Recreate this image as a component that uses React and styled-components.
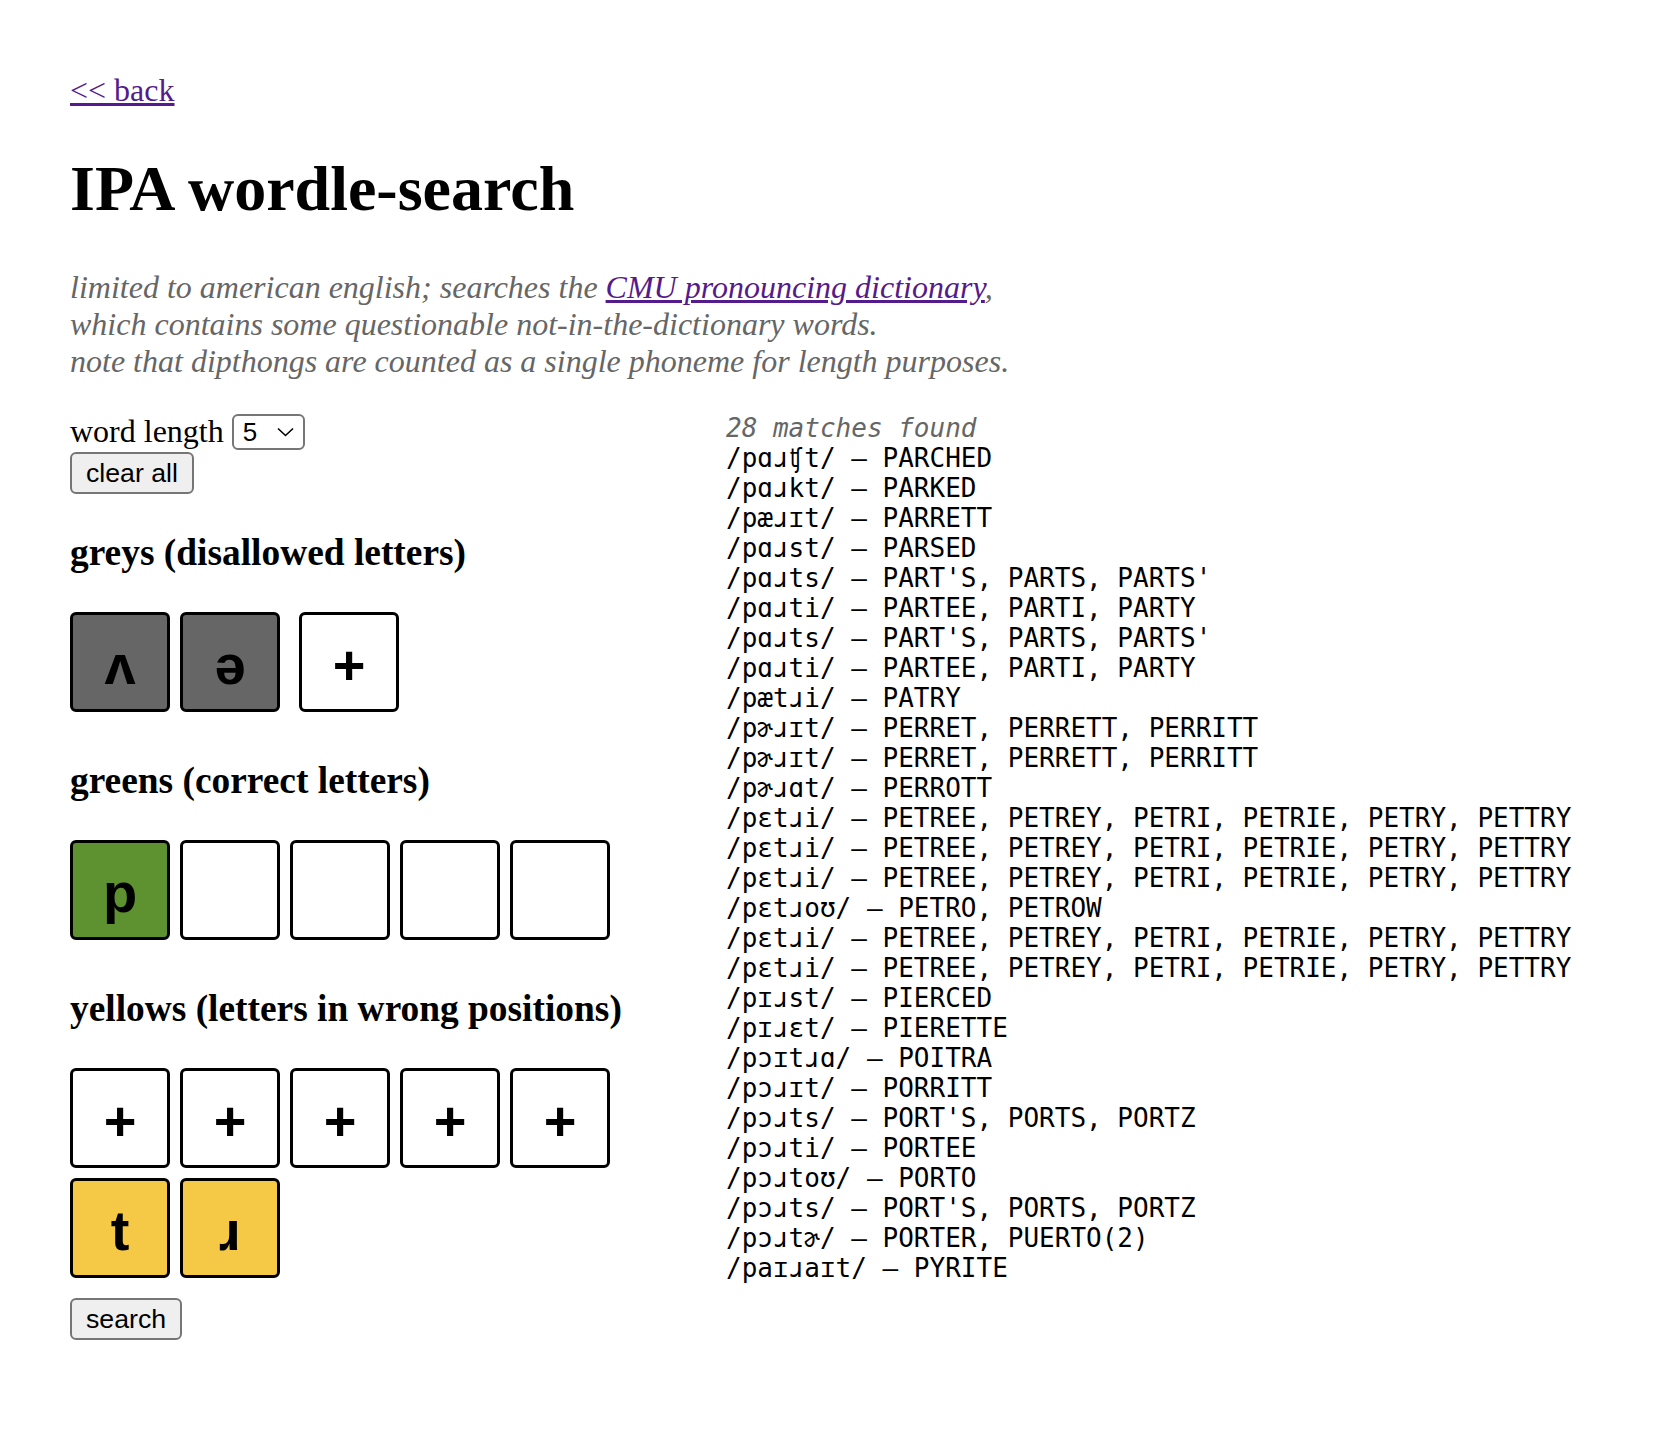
import styled, { createGlobalStyle } from "styled-components";

const GlobalStyle = createGlobalStyle`
    body {
        margin: 0;
        background: #fff;
        color: #000;
        font-family: "Liberation Serif", "Times New Roman", serif;
        font-size: 32px;
    }
`;

const Page = styled.div`
    padding: 72px 70px 80px;
`;

const Link = styled.a`
    color: #551a8b;
    text-decoration: underline;
    cursor: pointer;
`;

const Back = styled.div`
    line-height: 37px;
`;

const Title = styled.h1`
    font-size: 64px;
    font-weight: bold;
    line-height: 74px;
    margin: 43px 0;
`;

const Note = styled.p`
    margin: 0 0 33px;
    font-style: italic;
    color: #666;
    line-height: 37px;
`;

const Columns = styled.div`
    display: grid;
    grid-template-columns: 656px 1fr;
    align-items: start;
`;

const Controls = styled.div`
    display: flex;
    flex-direction: column;
    align-items: flex-start;
`;

const LengthRow = styled.label`
    display: flex;
    align-items: center;
    gap: 8px;
    height: 37px;
`;

const SelectWrap = styled.span`
    position: relative;
    display: inline-flex;
`;

const Select = styled.select`
    appearance: none;
    width: 73px;
    height: 36px;
    padding: 0 0 0 9px;
    border: 2px solid #767676;
    border-radius: 6px;
    background: #fff;
    color: #000;
    font-family: "Liberation Sans", Arial, sans-serif;
    font-size: 26px;
`;

const Chevron = styled.svg`
    position: absolute;
    right: 11px;
    top: 13px;
    pointer-events: none;
`;

const Button = styled.button`
    height: ${p => p.$height}px;
    margin-top: ${p => p.$top}px;
    padding: 0 14px;
    border: 2px solid #767676;
    border-radius: 6px;
    background: #efefef;
    color: #000;
    font-family: "Liberation Sans", Arial, sans-serif;
    font-size: 26.7px;
    cursor: pointer;
`;

const Section = styled.h3`
    font-size: 37.4px;
    font-weight: bold;
    line-height: 44px;
    margin: 37px 0;
`;

const TileRow = styled.div`
    display: flex;
    flex-wrap: wrap;
    gap: 10px;
    width: 540px;
    margin-bottom: 10px;
`;

const tileColors = {
    grey: "#666666",
    green: "#5e9130",
    yellow: "#f5c945",
    blank: "#ffffff",
};

const Tile = styled.div`
    box-sizing: border-box;
    width: 100px;
    height: 100px;
    margin-left: ${p => (p.$apart ? 9 : 0)}px;
    padding-top: 5px;
    display: flex;
    align-items: center;
    justify-content: center;
    border: 3px solid #000;
    border-radius: 6px;
    background: ${p => tileColors[p.$kind]};
    font-family: "Liberation Sans", "DejaVu Sans", Arial, sans-serif;
    font-weight: bold;
    font-size: 56px;
    cursor: pointer;
`;

const Results = styled.div`
    font-family: "DejaVu Sans Mono", Menlo, monospace;
    font-size: 26px;
    line-height: 30px;
    white-space: pre;
`;

const Count = styled.div`
    font-style: italic;
    color: #666;
`;

const matches = [
    ["pɑɹʧt", "PARCHED"],
    ["pɑɹkt", "PARKED"],
    ["pæɹɪt", "PARRETT"],
    ["pɑɹst", "PARSED"],
    ["pɑɹts", "PART'S, PARTS, PARTS'"],
    ["pɑɹti", "PARTEE, PARTI, PARTY"],
    ["pɑɹts", "PART'S, PARTS, PARTS'"],
    ["pɑɹti", "PARTEE, PARTI, PARTY"],
    ["pætɹi", "PATRY"],
    ["pɚɹɪt", "PERRET, PERRETT, PERRITT"],
    ["pɚɹɪt", "PERRET, PERRETT, PERRITT"],
    ["pɚɹɑt", "PERROTT"],
    ["pɛtɹi", "PETREE, PETREY, PETRI, PETRIE, PETRY, PETTRY"],
    ["pɛtɹi", "PETREE, PETREY, PETRI, PETRIE, PETRY, PETTRY"],
    ["pɛtɹi", "PETREE, PETREY, PETRI, PETRIE, PETRY, PETTRY"],
    ["pɛtɹoʊ", "PETRO, PETROW"],
    ["pɛtɹi", "PETREE, PETREY, PETRI, PETRIE, PETRY, PETTRY"],
    ["pɛtɹi", "PETREE, PETREY, PETRI, PETRIE, PETRY, PETTRY"],
    ["pɪɹst", "PIERCED"],
    ["pɪɹɛt", "PIERETTE"],
    ["pɔɪtɹɑ", "POITRA"],
    ["pɔɹɪt", "PORRITT"],
    ["pɔɹts", "PORT'S, PORTS, PORTZ"],
    ["pɔɹti", "PORTEE"],
    ["pɔɹtoʊ", "PORTO"],
    ["pɔɹts", "PORT'S, PORTS, PORTZ"],
    ["pɔɹtɚ", "PORTER, PUERTO(2)"],
    ["paɪɹaɪt", "PYRITE"],
];

const greens = ["p", "", "", "", ""];

export default function App() {
    return <Page>
        <GlobalStyle/>
        <Back><Link>&lt;&lt; back</Link></Back>
        <Title>IPA wordle-search</Title>
        <Note>
            limited to american english; searches the <Link>CMU pronouncing dictionary</Link>,<br/>
            which contains some questionable not-in-the-dictionary words.<br/>
            note that dipthongs are counted as a single phoneme for length purposes.
        </Note>
        <Columns>
            <Controls>
                <LengthRow>
                    word length
                    <SelectWrap>
                        <Select defaultValue="5">
                            {[3, 4, 5, 6, 7].map(n => <option key={n}>{n}</option>)}
                        </Select>
                        <Chevron width="17" height="10" viewBox="0 0 17 10">
                            <path d="M1 1.5 L8.5 8.5 L16 1.5" fill="none" stroke="#000" strokeWidth="1.6"/>
                        </Chevron>
                    </SelectWrap>
                </LengthRow>
                <Button $top={2} $height={42}>clear all</Button>

                <Section>greys (disallowed letters)</Section>
                <TileRow>
                    <Tile $kind="grey">ʌ</Tile>
                    <Tile $kind="grey">ə</Tile>
                    <Tile $kind="blank" $apart>+</Tile>
                </TileRow>

                <Section>greens (correct letters)</Section>
                <TileRow>
                    {greens.map((g, i) => <Tile key={i} $kind={g ? "green" : "blank"}>{g}</Tile>)}
                </TileRow>

                <Section>yellows (letters in wrong positions)</Section>
                <TileRow>
                    {[0, 1, 2, 3, 4].map(i => <Tile key={i} $kind="blank">+</Tile>)}
                    <Tile $kind="yellow">t</Tile>
                    <Tile $kind="yellow">ɹ</Tile>
                </TileRow>
                <Button $top={10} $height={42}>search</Button>
            </Controls>

            <Results>
                <Count>{matches.length} matches found</Count>
                {matches.map(([ipa, words], i) => <div key={i}>/{ipa}/ – {words}</div>)}
            </Results>
        </Columns>
    </Page>
}
